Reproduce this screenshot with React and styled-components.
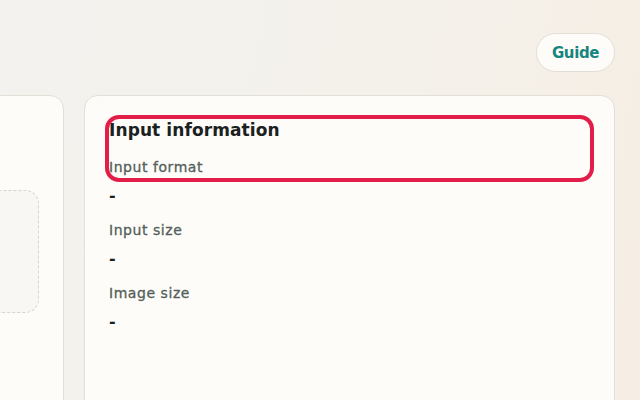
import React from "react";
import styled, { createGlobalStyle } from "styled-components";

const Global = createGlobalStyle`
  html, body { margin: 0; padding: 0; }
  body {
    width: 640px;
    height: 400px;
    overflow: hidden;
    font-family: "DejaVu Sans", "Noto Sans", "Liberation Sans", sans-serif;
    background: linear-gradient(100deg, #f3f2ee 0%, #f4f1eb 55%, #f6eee4 100%);
  }
`;

const Page = styled.div`
  height: 400px;
  display: flex;
  flex-direction: column;
  gap: 23px;
  padding: 33px 25px 0 0;
  box-sizing: border-box;
  overflow: hidden;
`;

const Header = styled.header`
  display: flex;
  justify-content: flex-end;
`;

const GuideButton = styled.button`
  height: 39px;
  padding: 0 15px;
  border-radius: 20px;
  border: 1px solid #e2ded5;
  background: #fdfcf8;
  color: #17857f;
  font-family: inherit;
  font-size: 15px;
  font-weight: 700;
  letter-spacing: -0.4px;
  cursor: pointer;
`;

const Columns = styled.div`
  flex: 1;
  display: flex;
  justify-content: flex-end;
  gap: 20px;
  min-height: 0;
`;

const Card = styled.section`
  position: relative;
  flex: 0 0 ${(p) => p.$width}px;
  background: #fdfcf8;
  border: 1px solid #e3dfd7;
  border-radius: 14px;
  box-sizing: border-box;
  height: 340px;
  padding: ${(p) => p.$padding};
`;

const DropZone = styled.div`
  margin-top: 94px;
  height: 121px;
  border: 1px dashed #d8d5cf;
  border-radius: 14px;
  background: #f8f7f3;
`;

const Title = styled.h2`
  margin: 0 0 15px;
  font-size: 17px;
  line-height: 24px;
  font-weight: 700;
  color: #1b2020;
  letter-spacing: 0.1px;
`;

const InfoList = styled.dl`
  margin: 0;
  display: flex;
  flex-direction: column;
`;

const Label = styled.dt`
  font-size: 14px;
  line-height: 20px;
  font-weight: 500;
  color: #53605a;
  letter-spacing: 0.55px;
  -webkit-text-stroke: 0.3px #53605a;
`;

const Value = styled.dd`
  margin: 9px 0 14px;
  font-size: 16px;
  line-height: 20px;
  font-weight: 700;
  color: #1b2020;
`;

const Highlight = styled.div`
  position: absolute;
  left: 20px;
  top: 19px;
  width: 489px;
  height: 67px;
  border: 4px solid #e31d4a;
  border-radius: 14px;
  box-sizing: border-box;
  pointer-events: none;
`;

const rows = [
  { label: "Input format", value: "-" },
  { label: "Input size", value: "-" },
  { label: "Image size", value: "-" },
];

export default function App() {
  return (
    <>
      <Global />
      <Page>
        <Header>
          <GuideButton>Guide</GuideButton>
        </Header>
        <Columns>
          <Card $width={400} $padding="0 24px 0 24px">
            <DropZone />
          </Card>
          <Card $width={531} $padding="22px 24px">
            <Title>Input information</Title>
            <InfoList>
              {rows.map((r) => (
                <React.Fragment key={r.label}>
                  <Label>{r.label}</Label>
                  <Value>{r.value}</Value>
                </React.Fragment>
              ))}
            </InfoList>
            <Highlight />
          </Card>
        </Columns>
      </Page>
    </>
  );
}
